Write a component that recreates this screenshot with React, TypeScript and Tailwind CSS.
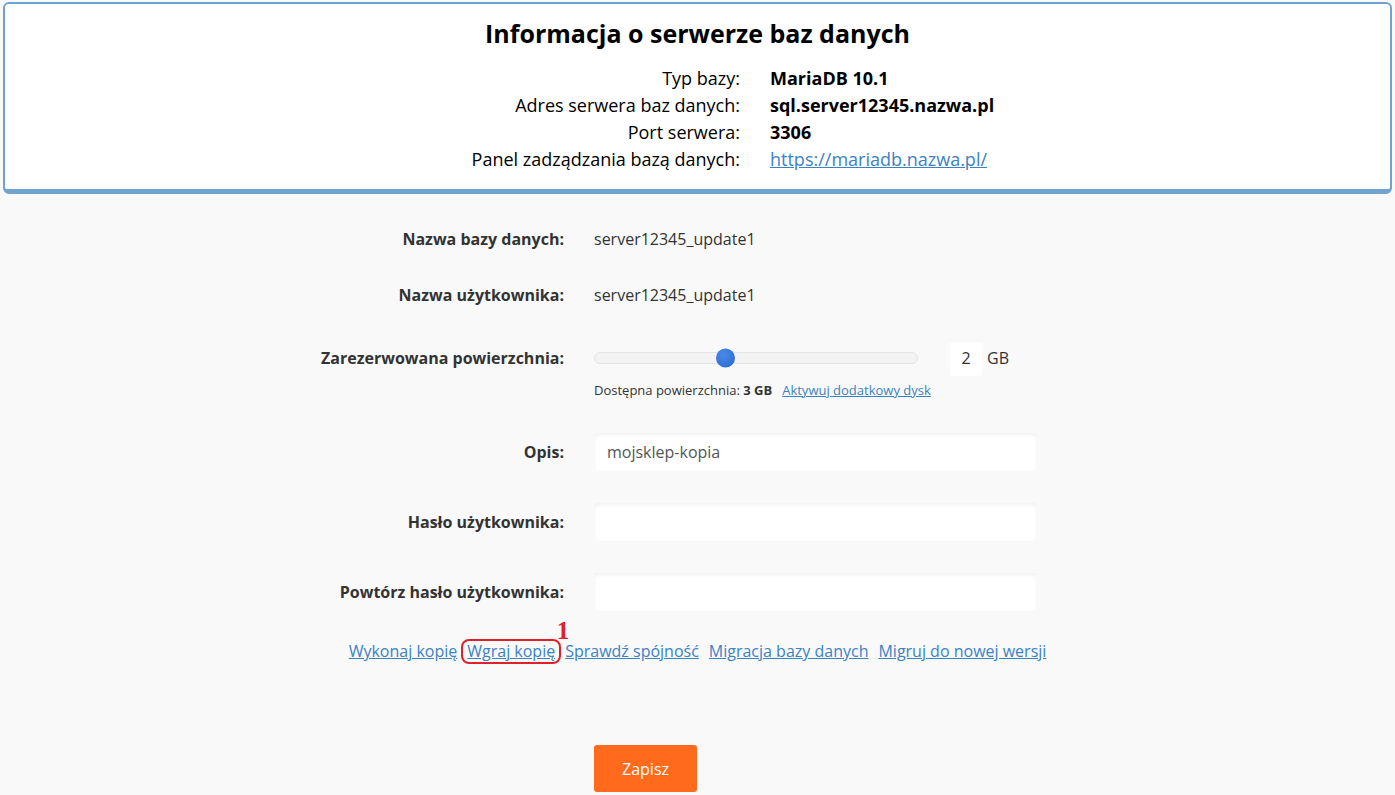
import React from 'react';

const font = { fontFamily: '"Open Sans", "Noto Sans", sans-serif' };

function InfoRow({ label, children }: { label: string; children: React.ReactNode }) {
  return (
    <div className="flex h-[27px] items-center">
      <div className="w-[735px] shrink-0 text-right text-[18px] text-black">{label}</div>
      <div className="pl-[30px] text-[18px]">{children}</div>
    </div>);
}

function FormRow({ label, height, children }: { label: string; height: string; children: React.ReactNode }) {
  return (
    <div className={`flex items-center ${height}`}>
      <div className="w-[564px] shrink-0 text-right text-[16px] font-bold text-[#333]">{label}</div>
      <div className="ml-[30px] flex-1">{children}</div>
    </div>);
}

function TextInput({ value = '' }: { value?: string }) {
  return (
    <div className="flex h-[38px] w-[443px] items-center rounded-[3px] bg-white px-[13px] text-[16px] text-[#555] shadow-[inset_0_2px_4px_rgba(0,0,0,0.06)]">
      {value}
    </div>);
}

export default function App() {
  return (
    <div style={font} className="min-h-[795px] w-full bg-[#f9f9f9] pt-[2px]">
      <div className="mx-[3px] h-[192px] rounded-[6px] border-2 border-b-[5px] border-[#6fa3d0] bg-white">
        <h1 className="pt-[11px] text-center text-[25px] font-bold leading-[36px] text-black">
          Informacja o serwerze baz danych
        </h1>
        <div className="mt-[14px]">
          <InfoRow label="Typ bazy:"><span className="font-bold text-black">MariaDB 10.1</span></InfoRow>
          <InfoRow label="Adres serwera baz danych:"><span className="font-bold text-black">sql.server12345.nazwa.pl</span></InfoRow>
          <InfoRow label="Port serwera:"><span className="font-bold text-black">3306</span></InfoRow>
          <InfoRow label="Panel zadządzania bazą danych:">
            <a href="#" className="text-[#3b82c4] underline">https://mariadb.nazwa.pl/</a>
          </InfoRow>
        </div>
      </div>

      <div className="pt-[17px]">
        <FormRow label="Nazwa bazy danych:" height="h-[56px]">
          <span className="text-[16px] text-[#333]">server12345_update1</span>
        </FormRow>
        <FormRow label="Nazwa użytkownika:" height="h-[56px]">
          <span className="text-[16px] text-[#333]">server12345_update1</span>
        </FormRow>

        <div className="mt-[17px] flex h-[36px] items-center">
          <div className="w-[564px] shrink-0 text-right text-[16px] font-bold text-[#333]">
            Zarezerwowana powierzchnia:
          </div>
          <div className="ml-[30px] flex items-center">
            <div className="relative h-[12px] w-[324px] rounded-full border border-[#e3e3e3] bg-[#f3f3f3]">
              <div className="absolute left-[121px] top-1/2 h-[19px] w-[19px] -translate-y-1/2 rounded-full bg-[radial-gradient(circle_at_40%_35%,#4a8ae6,#2466d2)]" />
            </div>
            <div className="ml-[31px] flex h-[36px] w-[34px] items-center justify-center rounded-[3px] bg-white text-[16px] text-[#333] shadow-[inset_0_1px_3px_rgba(0,0,0,0.05)]">
              2
            </div>
            <span className="ml-[4px] text-[16px] text-[#333]">GB</span>
          </div>
        </div>
        <div className="mt-[5px] flex h-[18px] items-center">
          <div className="ml-[594px] text-[13px] leading-[18px] text-[#333]">
            Dostępna powierzchnia: <b>3 GB</b>
            <a href="#" className="ml-[10px] text-[#3b82c4] underline">Aktywuj dodatkowy dysk</a>
          </div>
        </div>

        <div className="h-[33px]" />
        <FormRow label="Opis:" height="h-[39px]">
          <TextInput value="mojsklep-kopia" />
        </FormRow>
        <div className="h-[31px]" />
        <FormRow label="Hasło użytkownika:" height="h-[39px]">
          <TextInput />
        </FormRow>
        <div className="h-[31px]" />
        <FormRow label="Powtórz hasło użytkownika:" height="h-[39px]">
          <TextInput />
        </FormRow>

        <div className="mt-[29px] flex justify-center gap-[10px] text-[16px] leading-[22px]">
          <a href="#" className="text-[#3b82c4] underline">Wykonaj kopię</a>
          <span className="relative">
            <a href="#" className="text-[#3b82c4] underline">Wgraj kopię</a>
            <span className="absolute -left-[6px] -right-[6px] -top-[1px] -bottom-[2px] rounded-[8px] border-2 border-[#e0202a]" />
            <span style={{ fontFamily: '"Liberation Serif", serif' }} className="absolute -right-[14px] -top-[22px] text-[25px] font-bold leading-[25px] text-[#e0202a]">1</span>
          </span>
          <a href="#" className="text-[#3b82c4] underline">Sprawdź spójność</a>
          <a href="#" className="text-[#3b82c4] underline">Migracja bazy danych</a>
          <a href="#" className="text-[#3b82c4] underline">Migruj do nowej wersji</a>
        </div>

        <div className="mt-[83px] flex">
          <div className="ml-[594px]">
            <button className="h-[47px] w-[103px] rounded-[3px] bg-[#ff6a1c] text-[16px] text-white">Zapisz</button>
          </div>
        </div>
      </div>
    </div>);
}
